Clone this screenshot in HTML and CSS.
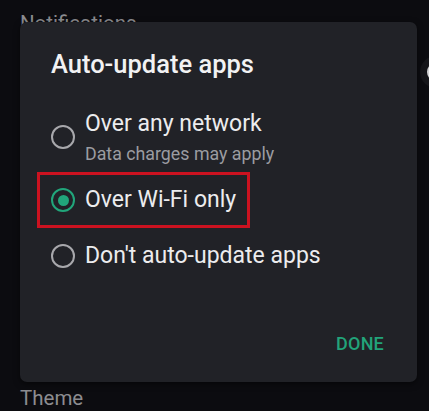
FILE: index.html
```html
<!DOCTYPE html>
<html lang="en">
<head>
<meta charset="utf-8">
<title>Auto-update apps</title>
<link rel="stylesheet" href="styles.css">
</head>
<body>
<div class="screen">
  <div class="settings">
    <div class="setting-row">
      <span class="setting-label">Notifications</span>
      <span class="toggle-knob"></span>
    </div>
    <div class="setting-row setting-row-last">
      <span class="setting-label">Theme</span>
    </div>
  </div>

  <div class="dialog" role="dialog" aria-labelledby="dlg-title">
    <h2 class="dialog-title" id="dlg-title">Auto-update apps</h2>
    <div class="options">
      <div class="option option-first">
        <span class="radio"></span>
        <div class="option-text">
          <div class="option-label">Over any network</div>
          <div class="option-sub">Data charges may apply</div>
        </div>
      </div>
      <div class="option option-highlight">
        <span class="radio radio-checked"></span>
        <div class="option-text">
          <div class="option-label">Over Wi-Fi only</div>
        </div>
      </div>
      <div class="option">
        <span class="radio"></span>
        <div class="option-text">
          <div class="option-label">Don't auto-update apps</div>
        </div>
      </div>
    </div>
    <div class="actions">
      <span class="btn-done">DONE</span>
    </div>
  </div>
</div>
</body>
</html>
```

FILE: styles.css
```css
* {
  box-sizing: border-box;
}

html, body {
  margin: 0;
  padding: 0;
  background: #0c0c10;
}

body {
  font-family: Roboto, "Noto Sans", "Liberation Sans", sans-serif;
  width: 429px;
  height: 411px;
  overflow: hidden;
}

.screen {
  position: relative;
  width: 429px;
  height: 411px;
  overflow: hidden;
}

.settings {
  display: flex;
  flex-direction: column;
  justify-content: space-between;
  height: 411px;
  padding: 11px 0 1px 20px;
}

.setting-row {
  display: flex;
  align-items: flex-start;
  justify-content: space-between;
}

.setting-label {
  font-size: 20.5px;
  line-height: 24px;
  color: #8c8c90;
}

.toggle-knob {
  flex: none;
  width: 18px;
  height: 18px;
  margin-top: 52px;
  margin-right: -16px;
  border-radius: 50%;
  background: #d4d4d6;
  box-shadow: 0 0 0 7px #16161a;
}

.dialog {
  position: absolute;
  left: 20px;
  top: 22px;
  width: 397px;
  height: 360px;
  background: #212227;
  border-radius: 7px;
  padding: 26px 33px 26px 31px;
  display: flex;
  flex-direction: column;
  box-shadow: 0 2px 6px rgba(0, 0, 0, 0.5);
}

.dialog-title {
  margin: 0 0 16px 0;
  font-size: 25.5px;
  line-height: 32px;
  font-weight: 500;
  color: #f2f2f3;
}

.options {
  display: flex;
  flex-direction: column;
}

.option {
  display: flex;
  align-items: center;
  gap: 10px;
  padding: 14px 0;
}

.option-first {
  padding-bottom: 8px;
}

.option-highlight {
  align-self: flex-start;
  margin-left: -14px;
  padding: 11px 11px;
  border: 3px solid #cc1220;
}

.radio {
  flex: none;
  width: 24px;
  height: 24px;
  border-radius: 50%;
  border: 2px solid #a8a8ac;
  display: flex;
  align-items: center;
  justify-content: center;
}

.radio-checked {
  border: 2.5px solid #21a67b;
}

.radio-checked::after {
  content: "";
  width: 11px;
  height: 11px;
  border-radius: 50%;
  background: #21a67b;
}

.option-label {
  font-size: 23px;
  line-height: 28px;
  color: #ececee;
}

.option-sub {
  margin-top: 6px;
  font-size: 17.8px;
  line-height: 20px;
  color: #9b9ca1;
}

.actions {
  margin-top: auto;
  display: flex;
  justify-content: flex-end;
}

.btn-done {
  font-size: 18px;
  line-height: 24px;
  font-weight: 500;
  color: #22a47a;
  letter-spacing: 0.2px;
}
```
